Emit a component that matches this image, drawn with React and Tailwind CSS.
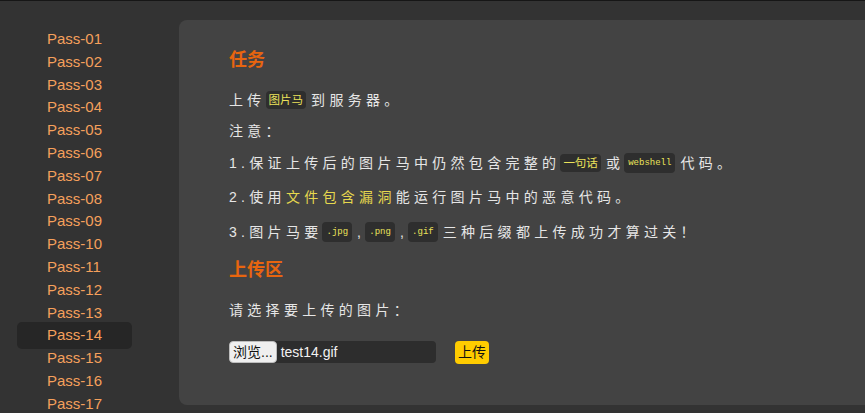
import React from 'react';

const passes = Array.from({ length: 17 }, (_, i) => `Pass-${String(i + 1).padStart(2, '0')}`);

const Chip = ({ children, mono }) => (
  <span
    className={`inline-block rounded-[4px] bg-[#2e2e2e] align-middle leading-[14px] tracking-normal text-[#ebe25a] ${
      mono ? "px-[4px] py-[3px] font-['Liberation_Mono',monospace] text-[9px]" : 'px-[3px] py-[2px] text-[11.5px]'
    }`}
  >
    {children}
  </span>
);

const App = () => {
  return (
    <div className="flex h-[413px] w-full overflow-hidden border-t border-[#161616] bg-[#333333] font-['Liberation_Sans','Noto_Sans_CJK_SC',sans-serif]">
      {/* Sidebar */}
      <div className="w-[179px] shrink-0 pt-[27px]">
        {passes.map((p) => {
          const active = p === 'Pass-14';
          return (
            <div
              key={p}
              className={`ml-[17px] w-[115px] pl-[30px] text-[15px] leading-[22.8px] text-[#f5a05c] ${
                active ? 'relative z-10 -my-[2px] rounded-[5px] bg-[#262626] py-[2px]' : ''
              }`}
            >
              {p}
            </div>
          );
        })}
      </div>

      {/* Main panel */}
      <div className="mt-[19px] h-[385px] flex-1 rounded-l-[8px] bg-[#434343] pl-[50px] pt-[20px] text-[14px] tracking-[4.3px] text-[#e6e6e6]">
        <div className="flex h-[40px] items-center text-[18px] font-bold tracking-normal text-[#e8650f]">任务</div>
        <div className="flex h-[40px] items-center">
          <span>上传</span>
          <Chip>图片马</Chip>
          <span className="ml-[5px]">到服务器。</span>
        </div>
        <div className="flex h-[22px] items-center">注意：</div>
        <div className="flex h-[42px] items-center whitespace-nowrap">
          <span>1.保证上传后的图片马中仍然包含完整的</span>
          <Chip>一句话</Chip>
          <span className="ml-[5px]">或</span>
          <Chip mono>webshell</Chip>
          <span className="ml-[5px]">代码。</span>
        </div>
        <div className="flex h-[26px] items-center whitespace-nowrap">
          <span>2.使用</span>
          <span className="text-[#e6d84e]">文件包含漏洞</span>
          <span>能运行图片马中的恶意代码。</span>
        </div>
        <div className="flex h-[44px] items-center whitespace-nowrap">
          <span>3.图片马要</span>
          <Chip mono>.jpg</Chip>
          <span className="ml-[5px]">,</span>
          <Chip mono>.png</Chip>
          <span className="ml-[5px]">,</span>
          <Chip mono>.gif</Chip>
          <span className="ml-[5px]">三种后缀都上传成功才算过关！</span>
        </div>
        <div className="flex h-[32px] items-center text-[18px] font-bold tracking-normal text-[#e8650f]">上传区</div>
        <div className="flex h-[48px] items-center">请选择要上传的图片：</div>
        <div className="flex h-[36px] items-center tracking-normal">
          <div className="flex h-[22px] w-[207px] items-center rounded-[4px] bg-[#2d2d2d]">
            <span className="flex h-[22px] items-center rounded-[4px] border border-[#bdbdbd] bg-[#efefef] px-[3px] text-[14px] text-[#111]">
              浏览...
            </span>
            <span className="ml-[4px] text-[14px] text-[#f2f2f2]">test14.gif</span>
          </div>
          <button className="ml-[19px] flex h-[23px] items-center rounded-[4px] bg-[#ffcc00] px-[3px] text-[14px] text-[#111]">
            上传
          </button>
        </div>
      </div>
    </div>
  );
};

export default App;
